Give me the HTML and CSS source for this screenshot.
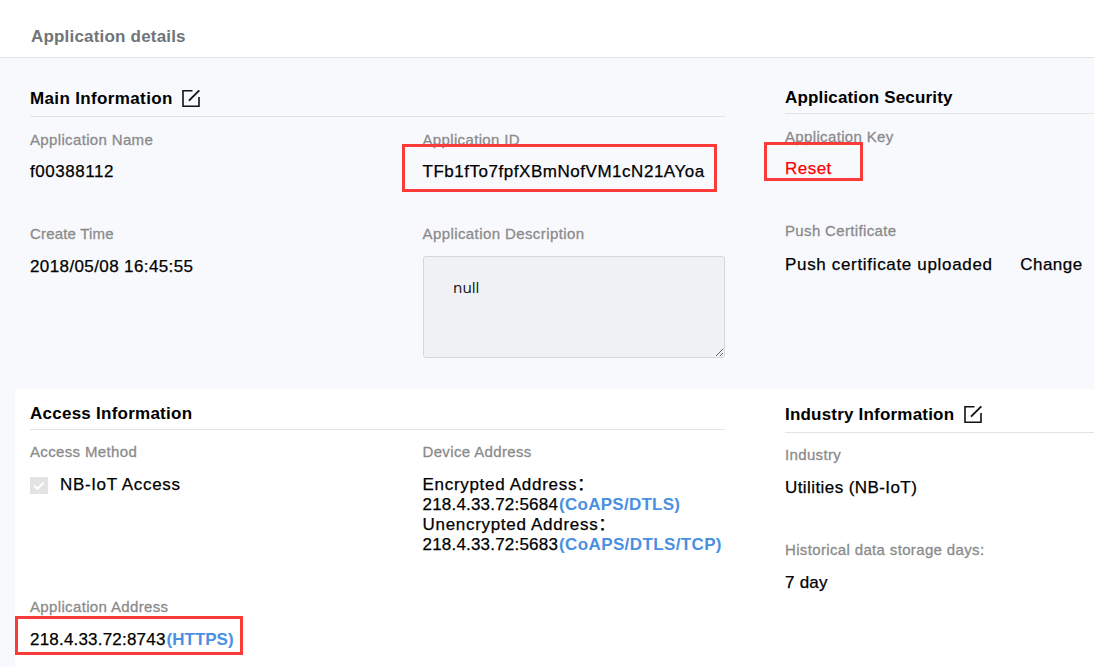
FILE: index.html
```html
<!DOCTYPE html>
<html lang="en">
<head>
<meta charset="utf-8">
<title>Application details</title>
<link rel="stylesheet" href="styles.css">
</head>
<body>
<header class="page-header"><h1 class="page-title">Application details</h1></header>
<main class="content">
  <section class="band band-main">
    <div class="panel panel-left">
      <h2 class="heading heading-main"><span class="wide-title">Main Information</span>
        <svg class="edit" viewBox="0 0 20 19" width="20" height="19"><path d="M11.5 1.8H2V17.2H18V8" /><path class="pen" d="M8 11.6 18.3 1.3" /></svg>
      </h2>
      <div class="fields">
        <div class="field">
          <div class="label">Application Name</div>
          <div class="value">f00388112</div>
        </div>
        <div class="field">
          <div class="label">Application ID</div>
          <div class="value marked mark-id">TFb1fTo7fpfXBmNofVM1cN21AYoa</div>
        </div>
        <div class="field">
          <div class="label create">Create Time</div>
          <div class="value time">2018/05/08 16:45:55</div>
        </div>
        <div class="field">
          <div class="label desc">Application Description</div>
          <textarea class="textarea" readonly>null</textarea>
        </div>
      </div>
    </div>
    <div class="panel panel-right">
      <h2 class="heading heading-security">Application Security</h2>
      <div class="field">
        <div class="label">Application Key</div>
        <div class="value marked mark-reset"><a class="reset">Reset</a></div>
      </div>
      <div class="field field-push">
        <div class="label">Push Certificate</div>
        <div class="value push"><span>Push certificate uploaded</span><a class="change">Change</a></div>
      </div>
    </div>
  </section>
  <section class="band band-access">
    <div class="panel panel-left">
      <h2 class="heading heading-access">Access Information</h2>
      <div class="fields">
        <div class="field">
          <div class="label">Access Method</div>
          <div class="value check-row">
            <svg class="check" viewBox="0 0 18 17" width="18" height="17"><rect width="18" height="17"/><path d="M4 8.6 7.4 11.8 13.6 5.6"/></svg>
            <span>NB-IoT Access</span>
          </div>
        </div>
        <div class="field">
          <div class="label">Device Address</div>
          <div class="value words">Encrypted Address：</div>
          <div class="value address">218.4.33.72:5684<b>(CoAPS/DTLS)</b></div>
          <div class="value words">Unencrypted Address：</div>
          <div class="value address">218.4.33.72:5683<b class="long">(CoAPS/DTLS/TCP)</b></div>
        </div>
        <div class="field">
          <div class="label">Application Address</div>
          <div class="value address marked mark-https">218.4.33.72:8743<b class="https">(HTTPS)</b></div>
        </div>
      </div>
    </div>
    <div class="panel panel-right">
      <h2 class="heading heading-industry"><span>Industry Information</span>
        <svg class="edit" viewBox="0 0 20 19" width="20" height="19"><path d="M11.5 1.8H2V17.2H18V8" /><path class="pen" d="M8 11.6 18.3 1.3" /></svg>
      </h2>
      <div class="field">
        <div class="label">Industry</div>
        <div class="value utilities">Utilities (NB-IoT)</div>
      </div>
      <div class="field field-days">
        <div class="label">Historical data storage days:</div>
        <div class="value days">7 day</div>
      </div>
    </div>
  </section>
</main>
</body>
</html>
```
FILE: styles.css
```css
*, *::after { box-sizing: border-box; }
body {
  margin: 0;
  height: 667px;
  overflow: hidden;
  background: #f8f9fd;
  color: #000;
  font: 17px/20px "Liberation Sans", "Noto Sans CJK SC", sans-serif;
}
.page-header {
  height: 58px;
  padding: 27px 31px 0;
  background: #fff;
  border-bottom: 1px solid #e0e2e3;
}
.page-title {
  margin: 0;
  font-size: 17px;
  line-height: 20px;
  letter-spacing: .19px;
  color: #6f7578;
}
.band {
  display: grid;
  grid-template-columns: 696px 1fr;
  column-gap: 59px;
}
.band-main { height: 331px; padding: 29px 0 0 30px; }
.band-access {
  height: 278px;
  margin-left: 15px;
  padding: 14px 0 0 15px;
  background: #fff;
}
.heading {
  display: flex;
  gap: 9px;
  margin: 0;
  border-bottom: 1px solid #e1e3e5;
  font-size: 17px;
  line-height: 22px;
  letter-spacing: .2px;
}
.heading-main { width: 695px; height: 29px; margin: 1px 0 13px; }
.heading-security { height: 27px; margin-bottom: 13px; letter-spacing: .16px; }
.heading-access { width: 695px; height: 27px; margin-bottom: 12px; letter-spacing: .25px; }
.heading-industry { height: 29px; margin: 1px 0 12px; }
.wide-title { letter-spacing: .36px; }
.edit { flex: none; fill: none; stroke: #111; stroke-width: 1.6; margin-top: 1px; }
.pen { stroke-width: 1.9; }
.heading-main .edit { margin-left: -1px; }
.fields {
  display: grid;
  grid-template-columns: 392.5px 302.5px;
  row-gap: 42px;
}
.label {
  height: 20px;
  margin-bottom: 12px;
  color: #8b8b8b;
  font-size: 15px;
  letter-spacing: .35px;
  -webkit-text-stroke: .3px;
}
.label.create { letter-spacing: .18px; }
.label.desc { letter-spacing: .41px; }
.value {
  height: 20px;
  letter-spacing: .53px;
  white-space: nowrap;
  -webkit-text-stroke: .25px;
}
.value.time { margin-top: 13px; letter-spacing: .39px; }
.value.words { letter-spacing: .7px; }
.value.address { letter-spacing: .2px; }
.value.days { letter-spacing: .23px; }
.value.utilities { letter-spacing: .42px; }
.value b { margin-left: 1px; color: #4a90e2; letter-spacing: .26px; -webkit-text-stroke: 0; }
.value .long { letter-spacing: .38px; }
.value .https { letter-spacing: 0; }
.textarea {
  display: block;
  width: 302px;
  height: 102px;
  margin: 12px 0 0 .5px;
  padding: 19px 29px;
  border: 1px solid #d6d7da;
  border-radius: 3px;
  outline: 0;
  background: #f0f1f5;
  color: #111;
  font: 15.3px/22px "Open Sans", sans-serif;
  resize: both;
}
.band-access .label { margin-bottom: 13px; }
.field-push { margin-top: 42px; }
.field-push .label { margin-bottom: 14px; }
.field-days { margin-top: 42px; }
.push { display: flex; gap: 27.5px; letter-spacing: .67px; }
.change { letter-spacing: .5px; }
.reset { color: #f00; letter-spacing: .48px; }
.check-row { display: flex; gap: 12px; letter-spacing: .65px; }
.check { flex: none; margin-top: 2px; }
.check rect { fill: #e3e3e3; }
.check path { fill: none; stroke: #fff; stroke-width: 2; }
/* Annotation frames drawn over the fields */
.marked { position: relative; }
.marked::after {
  content: "";
  position: absolute;
  border: 3px solid #fb3a3a;
}
.mark-id::after { left: -20.5px; top: -18px; width: 315px; height: 48px; }
.mark-reset::after { left: -21px; top: -17px; width: 99px; height: 39px; }
.mark-https::after { left: -15px; top: -14px; width: 228px; height: 39px; }
```
